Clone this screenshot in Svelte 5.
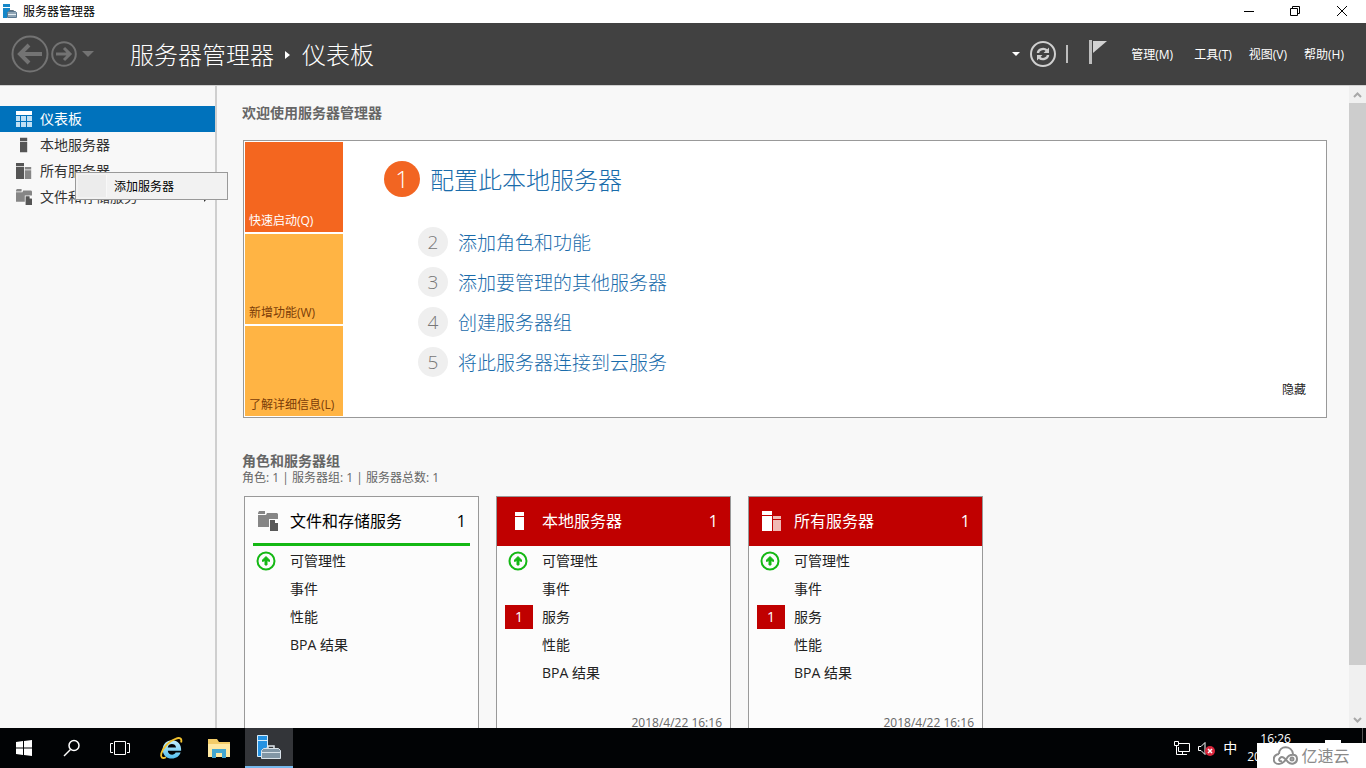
<script>
  const nav = [
    { id: 'dashboard', label: '仪表板', active: true },
    { id: 'server', label: '本地服务器' },
    { id: 'servers', label: '所有服务器' },
    { id: 'storage', label: '文件和存储服务', expandable: true }
  ];
  const menus = ['管理(M)', '工具(T)', '视图(V)', '帮助(H)'];
  const tiles = [
    { label: '快速启动(Q)', active: true },
    { label: '新增功能(W)' },
    { label: '了解详细信息(L)' }
  ];
  const steps = ['添加角色和功能', '添加要管理的其他服务器', '创建服务器组', '将此服务器连接到云服务'];
  const cards = [
    { icon: 'storage', title: '文件和存储服务', count: 1, rows: ['可管理性', '事件', '性能', 'BPA 结果'] },
    { icon: 'server', title: '本地服务器', count: 1, alert: true, rows: ['可管理性', '事件', '服务', '性能', 'BPA 结果'], time: '2018/4/22 16:16' },
    { icon: 'servers', title: '所有服务器', count: 1, alert: true, rows: ['可管理性', '事件', '服务', '性能', 'BPA 结果'], time: '2018/4/22 16:16' }
  ];
</script>

{#snippet glyph(id, size, main, soft)}
  <svg width={size} height={size} viewBox="0 0 20 20" aria-hidden="true">
    {#if id === 'dashboard'}
      <path fill={main} d="M0 0h20v5H0z" />
      <path fill={soft} d="M0 6.250h5v6.250H0zM0 13.750h5V20H0zM6.250 6.250h6.250v6.250H6.250zM6.250 13.750h6.250V20H6.250zM13.750 6.250H20v6.250h-6.250zM13.750 13.750H20V20h-6.250z" />
    {:else if id === 'server'}
      <path fill={main} d="M5 1h9v4H5zM5 6h9v13H5z" />
    {:else if id === 'servers'}
      <path fill={main} d="M0 0h10v4H0zM0 5h10v15H0z" />
      <path fill={soft} d="M11 5h8v3h-8zM11 9h8v11h-8z" />
    {:else}
      <path fill={soft} d="M0 2l1-2h6v3H0zM0 4h8l1-2h10l1 1v5h-9v8H0z" />
      <path fill={main} d="M12 9h5l3 3v8h-8z" />
      <path fill="#fff" d="M17 8l4 4h-4z" />
    {/if}
  </svg>
{/snippet}

<div class="window">
  <header class="titlebar">
    <svg class="appicon" width="15" height="15" viewBox="0 0 15 15" aria-hidden="true">
      <path fill="#1687c8" d="M0 0h7v3H0zM0 4h7v3l-3 2v5H0z" />
      <path fill="none" stroke="#60717f" d="M6.500 8v-1.500h4v1.500" />
      <path fill="#8fa5b5" stroke="#5b7890" d="M4.500 8.500l1-1h7l1 1v5h-9z" />
      <path stroke="#e4eef4" d="M5 10.500h8" />
    </svg>
    <span class="caption">服务器管理器</span>
    <div class="winbuttons">
      <button aria-label="最小化"><svg width="12" height="12"><path d="M1 6.500h10" stroke="#000" /></svg></button>
      <button aria-label="还原"><svg width="12" height="12"><path d="M1.500 3.500h7v7h-7zM3.500 3v-1.500h7v7H9" fill="none" stroke="#000" /></svg></button>
      <button aria-label="关闭"><svg width="12" height="12"><path d="M1 1l10 10M11 1L1 11" stroke="#000" /></svg></button>
    </div>
  </header>

  <div class="banner">
    <button class="plain" aria-label="后退">
      <svg width="38" height="38" viewBox="0 0 38 38"><circle cx="19" cy="19" r="17.500" fill="none" stroke="#737373" stroke-width="2" /><path d="M31 19H9M18 10l-9 9 9 9" fill="none" stroke="#737373" stroke-width="4" /></svg>
    </button>
    <button class="plain" aria-label="前进">
      <svg width="26" height="26" viewBox="0 0 26 26"><circle cx="13" cy="13" r="11.800" fill="none" stroke="#737373" stroke-width="2" /><path d="M5 13h14M13 7l6 6-6 6" fill="none" stroke="#737373" stroke-width="3" /></svg>
    </button>
    <button class="plain history" aria-label="历史记录"><svg width="12" height="6"><path d="M0 0h12L6 6z" fill="#737373" /></svg></button>
    <h1>服务器管理器 <svg width="6" height="8"><path d="M0 0l5 4-5 4z" fill="#fff" /></svg> 仪表板</h1>
    <div class="tools">
      <button class="plain" aria-label="更多"><svg width="8" height="4"><path d="M0 0h8L4 4z" fill="#fff" /></svg></button>
      <button class="plain" aria-label="刷新">
        <svg width="26" height="26" viewBox="0 0 26 26"><circle cx="13" cy="13" r="12" fill="none" stroke="#cfcfcf" stroke-width="2" /><path d="M8 12c0-3 5-6 9-2.500M18 14c0 3-5 6-9 2.500" fill="none" stroke="#cfcfcf" stroke-width="2.400" /><path d="M19 6.500v5.500h-5.500zM7 19.500V14h5.500z" fill="#cfcfcf" /></svg>
      </button>
      <span class="bar"></span>
      <button class="plain flag" aria-label="通知"><svg width="18" height="24"><path d="M0 0h3v24H0z" fill="#bdbdbd" /><path d="M4 1h14L4 13z" fill="#d2d2d2" /></svg></button>
      <nav class="menus">
        {#each menus as m}<button class="plain">{m}</button>{/each}
      </nav>
    </div>
  </div>

  <div class="body">
    <aside>
      {#each nav as item}
        <a href="#{item.id}" class:active={item.active}>
          {@render glyph(item.id, 16, item.active ? '#fff' : '#555', item.active ? '#bfe0f5' : '#868686')}
          <span>{item.label}</span>
          {#if item.expandable}<svg class="more" width="5" height="10"><path d="M0 0l5 5-5 5z" fill="#333" /></svg>{/if}
        </a>
      {/each}
      <div class="context" role="menu">
        <span class="gutter"></span>
        <button class="plain" role="menuitem">添加服务器</button>
      </div>
    </aside>

    <main>
      <h2>欢迎使用服务器管理器</h2>
      <section class="welcome">
        <div class="tiles">
          {#each tiles as t}<button class:hot={t.active}>{t.label}</button>{/each}
        </div>
        <div class="steps">
          <a class="first" href="#configure"><b>1</b><span>配置此本地服务器</span></a>
          {#each steps as s, i}<a href="#step{i + 2}"><b>{i + 2}</b><span>{s}</span></a>{/each}
        </div>
        <button class="plain hide">隐藏</button>
      </section>

      <h2 class="groups">角色和服务器组</h2>
      <p>角色: 1 | 服务器组: 1 | 服务器总数: 1</p>
      <div class="cards">
        {#each cards as c}
          <article class:alert={c.alert}>
            <header>
              {@render glyph(c.icon, 20, c.alert ? '#fff' : '#585858', c.alert ? '#f0b9b4' : '#868686')}
              <h3>{c.title}</h3><span>{c.count}</span>
            </header>
            <ul>
              {#each c.rows as r, i}
                <li>
                  <span class="state">
                    {#if i === 0}
                      <svg width="20" height="20" viewBox="0 0 20 20"><circle cx="10" cy="10" r="8.500" fill="none" stroke="#14b814" stroke-width="2" /><path d="M10 5.500l3.500 3.500v1.500L11 9.500V14H9V9.500l-2.500 1V9z" fill="#14b814" stroke="#14b814" /></svg>
                    {:else if r === '服务'}<em>1</em>{/if}
                  </span>
                  <a href="#{c.icon}-{i}">{r}</a>
                </li>
              {/each}
            </ul>
            {#if c.time}<time>{c.time}</time>{/if}
          </article>
        {/each}
      </div>
    </main>

    <div class="scroll">
      <button aria-label="向上滚动"><svg width="9" height="6"><path d="M1 5l3.500-3.500L8 5" fill="none" stroke="#a8a8a8" stroke-width="2" /></svg></button>
      <div class="track"><div class="thumb"></div></div>
      <button aria-label="向下滚动"><svg width="9" height="6"><path d="M1 1l3.500 3.500L8 1" fill="none" stroke="#a8a8a8" stroke-width="2" /></svg></button>
    </div>
  </div>

  <footer class="taskbar">
    <button aria-label="开始"><svg width="16" height="16"><path fill="#fff" d="M0 2l7-1v6.500H0zM8 1l8-1v7.500H8zM0 8.500h7V15l-7-1zM8 8.500h8V16l-8-1z" /></svg></button>
    <button aria-label="搜索"><svg width="18" height="18"><circle cx="11" cy="6.500" r="5" fill="none" stroke="#fff" stroke-width="1.500" /><path d="M7.500 10.500L1 17" stroke="#fff" stroke-width="1.500" /></svg></button>
    <button aria-label="任务视图"><svg width="20" height="14"><path d="M4.500 .5h11v13h-11zM3 2.500H.5v9H3M17 2.500h2.500v9H17" fill="none" stroke="#fff" /></svg></button>
    <button class="pinned" aria-label="Internet Explorer">
      <svg width="24" height="24" viewBox="0 0 26 26">
        <defs><linearGradient id="ie" x2="0" y2="1"><stop stop-color="#c4f0ff" /><stop offset="1" stop-color="#55c0ee" /></linearGradient></defs>
        <path fill="url(#ie)" fill-rule="evenodd" d="M24 16H9.500c.5 5 7 5.500 8.500 2h5.500c-1.500 4-5 6.500-9.500 6.500-6 0-10-4-10-10S8.500 4.500 14 4.500c6.500 0 10.500 4.500 10 11.500zM9.500 12.500h9c-.5-5-8.500-5-9 0z" />
        <path fill="none" stroke="#f4c430" stroke-width="2" d="M24 7c1-4-1-6-6-4C11 5 4 13 2.500 19c-1 4 1 6 5 4" />
      </svg>
    </button>
    <button aria-label="文件资源管理器"><svg width="22" height="19"><path fill="#f3cc68" d="M0 0h9l2 3h11v15H0z" /><path fill="#ffe9a3" d="M0 5h22v13H0z" /><path fill="#43a7d1" d="M4 10h14v9h-4v-5H8v5H4z" /></svg></button>
    <button class="running" aria-label="服务器管理器">
      <svg width="26" height="26" viewBox="0 0 26 26"><path fill="#2592e2" stroke="#d6ecfb" d="M1.500 1.500h10v12l-5 3v6h-5z" /><path stroke="#d6ecfb" d="M2 6.500h9" /><path fill="none" stroke="#dfe6ec" stroke-width="1.500" d="M12 14.500V12h6v2.500" /><path fill="#8296a5" stroke="#d9e2e9" d="M5.500 16.500l2-2h15l2 2v8h-19z" /><path stroke="#d9e2e9" d="M6 18.500h18" /></svg>
    </button>
    <div class="tray">
      <svg width="17" height="14"><path d="M4 2.500h11.500v8H4.500V6M8.500 11v2.500M5 13.500h8M.5 .5h4v4h-4zM2.500 5v8.500H5" fill="none" stroke="#fff" /></svg>
      <svg width="18" height="15"><path d="M.5 5.500H3l4-4v12l-4-4H.5z" fill="none" stroke="#fff" /><circle cx="12" cy="10" r="5" fill="#d9263c" /><path d="M10 8l4 4M14 8l-4 4" stroke="#fff" stroke-width="1.500" /></svg>
      <span class="ime">中</span>
      <div class="clock"><span>16:26</span><span>2018/4/22</span></div>
      <svg class="notes" width="16" height="16"><path fill="#fff" d="M0 0h16v12H8l-4 4v-4H0z" /></svg>
      <span class="peek"></span>
    </div>
  </footer>

  <div class="watermark">
    <svg width="26" height="20" viewBox="0 0 26 20" fill="none" stroke="#8d8d8d" stroke-width="2">
      <path d="M6 8c0-9 13-9 14 0M6 8C-1 9-1 18 6 18c4 0 6-3 8-6 2-4 10-5 10 1 0 5-6 6-9 3-2-2-5-7-8-4-2 2 0 4 2 3" /><circle cx="19" cy="13" r="1.500" />
    </svg>
    <span>亿速云</span>
  </div>
</div>

<style>
  :global(body) { margin: 0; }
  .window {
    height: 100vh; display: flex; flex-direction: column; position: relative; overflow: hidden;
    font-family: "Open Sans", "Noto Sans CJK SC", sans-serif; font-size: 12px; line-height: 16px; color: #222; background: #f8f8f8;
  }
  .window * { box-sizing: border-box; }
  button { font: inherit; color: inherit; border: 0; padding: 0; background: none; }
  button svg { display: block; }
  a { color: inherit; text-decoration: none; }
  h1, h2, h3, p, ul { margin: 0; padding: 0; font-weight: 400; }

  .titlebar { flex: none; height: 23px; background: #fff; display: flex; align-items: center; padding-left: 3px; color: #000; }
  .caption { margin-left: 5px; }
  .winbuttons { margin-left: auto; display: flex; height: 100%; }
  .winbuttons button { width: 46px; display: grid; place-items: center; padding-bottom: 2px; }
  .winbuttons button:last-child { width: 48px; }

  .banner { flex: none; height: 62px; background: #414141; color: #fff; display: flex; align-items: center; padding: 0 22px 0 11px; }
  .banner > button + button { margin-left: 2px; }
  .banner > .history { margin-left: 5px; }
  h1 { margin-left: 36px; padding-top: 2px; font-size: 24px; line-height: 32px; font-weight: 300; display: flex; align-items: center; gap: 11px; white-space: nowrap; }
  .tools { margin-left: auto; display: flex; align-items: center; gap: 10px; }
  .bar { width: 2px; height: 18px; background: #bdbdbd; }
  .flag { margin: 0 14px 4px 11px; }
  .menus { display: flex; gap: 17px; white-space: nowrap; padding-top: 2px; }
  .menus button:first-child { margin-right: 4px; }

  .body { flex: 1; min-height: 0; display: flex; border-top: 1px solid #d0d0d0; }
  aside { flex: none; width: 217px; border-right: 2px solid #cfcfcf; padding-top: 20px; position: relative; }
  aside a { display: flex; align-items: center; height: 26px; padding: 0 6px 0 16px; gap: 8px; font-size: 14px; color: #333; }
  aside a.active { background: #0072bc; color: #fff; }
  .more { margin-left: auto; }
  .context { position: absolute; left: 75px; top: 86px; width: 153px; height: 28px; border: 1px solid #999; background: #f2f2f2; display: flex; align-items: center; padding: 2px; z-index: 2; color: #000; }
  .context button { padding-top: 2px; }
  .gutter { width: 29px; height: 100%; background: #ececec; border-right: 1px solid #f8f8f8; margin-right: 7px; }

  main { flex: 1; min-width: 0; overflow: hidden; padding: 19px 22px 0 25px; }
  h2 { font-size: 14px; font-weight: 700; color: #666; line-height: 16px; }
  .welcome { margin: 19px 0 0 1px; border: 1px solid #999; background: #fff; display: flex; padding: 1px; position: relative; }
  .tiles { display: flex; flex-direction: column; gap: 2px; }
  .tiles button { width: 98px; height: 90px; background: #ffb444; color: #7a3c08; text-align: left; display: flex; align-items: flex-end; padding: 0 4px 3px; white-space: nowrap; }
  .tiles .hot { background: #f4661f; color: #fff; }
  .steps { padding: 15px 0 0 41px; display: flex; flex-direction: column; align-items: flex-start; color: #1a6cab; font-weight: 300; }
  .steps a { display: flex; align-items: center; gap: 10px; height: 40px; margin-left: 34px; font-size: 19px; line-height: 28px; }
  .steps b { width: 30px; height: 30px; border-radius: 50%; background: #efefef; color: #777; font-weight: 300; display: grid; place-items: center; }
  .steps span { padding-top: 1px; }
  .steps .first { height: 44px; margin: 0 0 21px; font-size: 24px; }
  .steps .first b { width: 36px; height: 36px; background: #f26522; color: #fff; }
  .hide { margin: auto 19px 18px auto; }
  .groups { margin-top: 35px; }
  p { color: #666; margin-top: 1px; }
  .cards { display: flex; gap: 17px; margin: 10px 0 0 2px; }
  article { flex: none; width: 235px; height: 240px; border: 1px solid #999; background: #fcfcfc; display: flex; flex-direction: column; }
  article header { height: 49px; display: flex; align-items: center; margin: 0 8px; padding: 2px 4px 0 5px; border-bottom: 3px solid #14b814; color: #000; font-size: 16px; line-height: 20px; }
  article.alert header { margin: 0; padding: 0 12px 1px 13px; border: 0; background: #c00000; color: #fff; }
  h3 { font-size: 16px; margin-left: 12px; flex: 1; }
  ul { list-style: none; padding: 1px 8px 0; font-size: 14px; }
  li { height: 28px; display: flex; align-items: center; gap: 9px; }
  .state { width: 28px; height: 24px; display: grid; align-items: center; }
  .state svg { margin-left: 3px; }
  em { height: 24px; font-style: normal; background: #c00000; color: #fff; display: grid; place-items: center; }
  time { margin: auto 8px 4px auto; color: #666; }

  .scroll { flex: none; width: 17px; background: #f0f0f0; display: flex; flex-direction: column; }
  .scroll button { height: 17px; display: grid; place-items: center; }
  .track { flex: 1; }
  .thumb { height: 92.500%; background: #cdcdcd; }

  .taskbar { flex: none; height: 40px; background: #010305; color: #fff; display: flex; }
  .taskbar button { width: 48px; display: grid; place-items: center; }
  .taskbar .pinned { margin-left: 3px; }
  .taskbar button.running { background: #333539; border-bottom: 2px solid #76b9ed; margin-left: 2px; }
  .tray { margin-left: auto; display: flex; align-items: center; gap: 7px; }
  .ime { font-size: 14px; margin-right: 3px; }
  .clock { display: flex; flex-direction: column; align-items: center; line-height: 18px; }
  .notes { margin: 0 14px; }
  .peek { width: 4px; height: 40px; border-left: 1px solid #555; }
  .watermark { position: absolute; right: 0; bottom: 0; width: 109px; height: 25px; background: #fff; color: #8a8a8a; display: flex; align-items: center; justify-content: center; gap: 2px; font-size: 16px; z-index: 3; }
</style>
